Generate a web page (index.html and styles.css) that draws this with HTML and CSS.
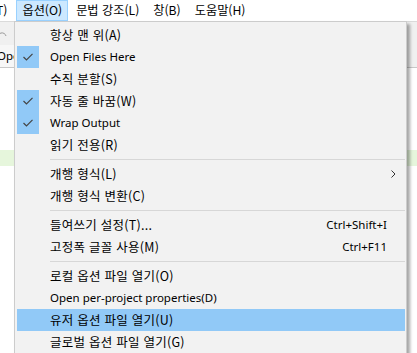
FILE: index.html
```html
<!DOCTYPE html>
<html lang="ko">
<head>
<meta charset="utf-8">
<link rel="stylesheet" href="styles.css">
</head>
<body>
<div class="app">
  <div class="menubar">
    <span class="mb-item mb-cut">T)</span>
    <span class="mb-item mb-active ko">옵션(O)</span>
    <span class="mb-item ko">문법 강조(L)</span>
    <span class="mb-item ko">창(B)</span>
    <span class="mb-item ko">도움말(H)</span>
  </div>
  <div class="toolbar">
    <svg class="tb-icon" width="10" height="10" viewBox="0 0 10 10"><path d="M-2 8 A4 4 0 0 1 6 6" fill="none" stroke="#9a9a9a" stroke-width="1"/></svg>
  </div>
  <div class="tabs"><span class="tab">Ope</span></div>
  <div class="editor">
    <div class="cur-line"></div>
  </div>

  <div class="menu">
    <div class="mi"><span class="ck"></span><span class="lbl ko">항상 맨 위(A)</span></div>
    <div class="mi"><span class="ck on"><svg width="10" height="8" viewBox="0 0 10 8"><path d="M0.5 4 L3.5 7 L9.5 0.8" fill="none" stroke="#444" stroke-width="1.2"/></svg></span><span class="lbl">Open Files Here</span></div>
    <div class="mi"><span class="ck"></span><span class="lbl ko">수직 분할(S)</span></div>
    <div class="mi"><span class="ck on"><svg width="10" height="8" viewBox="0 0 10 8"><path d="M0.5 4 L3.5 7 L9.5 0.8" fill="none" stroke="#444" stroke-width="1.2"/></svg></span><span class="lbl ko">자동 줄 바꿈(W)</span></div>
    <div class="mi"><span class="ck on"><svg width="10" height="8" viewBox="0 0 10 8"><path d="M0.5 4 L3.5 7 L9.5 0.8" fill="none" stroke="#444" stroke-width="1.2"/></svg></span><span class="lbl">Wrap Output</span></div>
    <div class="mi"><span class="ck"></span><span class="lbl ko">읽기 전용(R)</span></div>
    <div class="sep"></div>
    <div class="mi"><span class="ck"></span><span class="lbl ko">개행 형식(L)</span><svg class="sub" width="5" height="8" viewBox="0 0 5 8"><path d="M0.5 0.5 L4 4 L0.5 7.5" fill="none" stroke="#333" stroke-width="1"/></svg></div>
    <div class="mi"><span class="ck"></span><span class="lbl ko">개행 형식 변환(C)</span></div>
    <div class="sep"></div>
    <div class="mi"><span class="ck"></span><span class="lbl ko">들여쓰기 설정(T)...</span><span class="sc">Ctrl+Shift+I</span></div>
    <div class="mi"><span class="ck"></span><span class="lbl ko">고정폭 글꼴 사용(M)</span><span class="sc">Ctrl+F11</span></div>
    <div class="sep"></div>
    <div class="mi"><span class="ck"></span><span class="lbl ko">로컬 옵션 파일 열기(O)</span></div>
    <div class="mi"><span class="ck"></span><span class="lbl">Open per-project properties(D)</span></div>
    <div class="mi hot"><span class="ck"></span><span class="lbl ko">유저 옵션 파일 열기(U)</span></div>
    <div class="mi"><span class="ck"></span><span class="lbl ko">글로벌 옵션 파일 열기(G)</span></div>
  </div>
</div>
</body>
</html>
```
FILE: styles.css
```css
* { box-sizing: border-box; }
html, body { margin: 0; padding: 0; }
body {
  width: 417px;
  height: 353px;
  overflow: hidden;
  font-family: "Noto Sans", "Noto Sans CJK KR", sans-serif;
  font-size: 11.5px;
  color: #000;
  background: #fff;
}
.ko {
  font-family: "Noto Sans CJK KR", "Noto Sans", sans-serif;
  font-size: 12.5px;
  letter-spacing: 0.25px;
}
.app {
  position: relative;
  width: 417px;
  height: 353px;
  display: flex;
  flex-direction: column;
}
.menubar {
  height: 21px;
  display: flex;
  align-items: stretch;
  background: #fff;
}
.menubar .ko {
  font-size: 12.2px;
  letter-spacing: 0;
}
.mb-item {
  display: flex;
  align-items: center;
  padding: 0 5px;
  border: 1px solid transparent;
  line-height: 1;
  margin-right: 2px;
}
.mb-cut {
  padding: 0;
  margin-left: -5px;
  margin-right: 8px;
  font-family: "Noto Sans CJK KR", sans-serif;
  font-size: 12.2px;
}
.mb-active {
  background: #cce8ff;
  border-color: #99d1ff;
}
.toolbar {
  height: 24px;
  background: #f0f0f0;
  border-top: 1px solid #dadada;
  position: relative;
}
.tb-icon { position: absolute; left: 0; top: 8px; }
.tabs {
  height: 23px;
  background: #f0f0f0;
  border-bottom: 1px solid #c8c8c8;
  display: flex;
}
.tab {
  display: flex;
  align-items: center;
  margin-left: -7px;
  padding: 0 4px;
  background: #f7f7f7;
  border-right: 1px solid #c8c8c8;
  line-height: 1;
}
.editor {
  flex: 1;
  background: #fff;
  padding-top: 82px;
}
.cur-line {
  height: 16px;
  background: #e6f6dc;
}
.menu {
  position: absolute;
  left: 14px;
  top: 21px;
  width: 393px;
  height: 340px;
  background: #f2f2f2;
  border: 1px solid #cccccc;
  padding: 2px 1px 0 2px;
  box-shadow: 3px 3px 3px rgba(0,0,0,0.35);
}
.mi {
  height: 22px;
  display: flex;
  align-items: center;
  line-height: 1;
  white-space: nowrap;
}
.mi.hot { background: #91c9f7; }
.ck {
  width: 22px;
  height: 22px;
  flex: none;
  display: flex;
  align-items: center;
  justify-content: center;
  margin-right: 11px;
}
.ck.on { background: #91c9f7; }
.lbl { flex: 1; }
.sc { padding-right: 18px; }
.sub { margin-right: 9px; }
.sep {
  height: 1px;
  margin: 3px 0 3px 33px;
  background: #d7d7d7;
}
```
